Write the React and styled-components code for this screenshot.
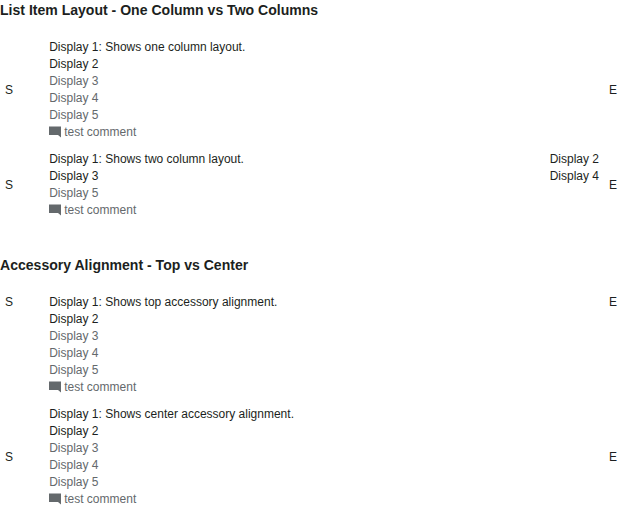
import React from "react";
import styled, { createGlobalStyle } from "styled-components";

const Global = createGlobalStyle`
  body { margin: 0; background: #fff; color: #1c1f21; font: 12px/17px "Liberation Sans", Arial, sans-serif; -webkit-font-smoothing: antialiased; }
`;
const Page = styled.main`
  height: 530px;
  overflow: hidden;
`;
const Section = styled.section`
  margin-bottom: 36px;
`;
const Heading = styled.h2`
  margin: 0 0 19px;
  font-size: 14.06px;
  line-height: 20px;
  font-weight: bold;
`;
const Item = styled.div`
  display: flex;
  align-items: ${(p) => (p.$top ? "flex-start" : "center")};
  margin-bottom: 10px;
`;
const Start = styled.div`
  width: 44.2px;
  padding-left: 5px;
  box-sizing: content-box;
`;
const End = styled.div`
  width: 13px;
  margin-left: 10px;
`;
const Column = styled.div`
  flex: 1;
  text-align: ${(p) => (p.$right ? "right" : "left")};
  align-self: flex-start;
`;
const Line = styled.div`
  height: 17px;
  color: ${(p) => (p.$muted ? "#64696c" : "#1c1f21")};
`;
const Comment = styled(Line)`
  display: flex;
  gap: 3px;
`;
const Icon = styled.svg`
  width: 12px;
  height: 12px;
  margin-top: 2px;
  fill: #64696c;
`;

function ListItem({ left, right, top }) {
  return (
    <Item $top={top}>
      <Start>S</Start>
      <Column>
        {left.map(([text, muted]) => <Line key={text} $muted={muted}>{text}</Line>)}
        <Comment $muted>
          <Icon viewBox="0 0 12 12"><path d="M0 .6h12v11L9 9H0z" /></Icon>
          test comment
        </Comment>
      </Column>
      {right && <Column $right>{right.map((t) => <Line key={t}>{t}</Line>)}</Column>}
      <End>E</End>
    </Item>
  );
}

const full = (title) => [[title], ["Display 2"], ["Display 3", true], ["Display 4", true], ["Display 5", true]];

export default function App() {
  return (
    <Page>
      <Global />
      <Section>
        <Heading>List Item Layout - One Column vs Two Columns</Heading>
        <ListItem left={full("Display 1: Shows one column layout.")} />
        <ListItem
          left={[["Display 1: Shows two column layout."], ["Display 3"], ["Display 5", true]]}
          right={["Display 2", "Display 4"]}
        />
      </Section>
      <Section>
        <Heading>Accessory Alignment - Top vs Center</Heading>
        <ListItem top left={full("Display 1: Shows top accessory alignment.")} />
        <ListItem left={full("Display 1: Shows center accessory alignment.")} />
      </Section>
    </Page>
  );
}
